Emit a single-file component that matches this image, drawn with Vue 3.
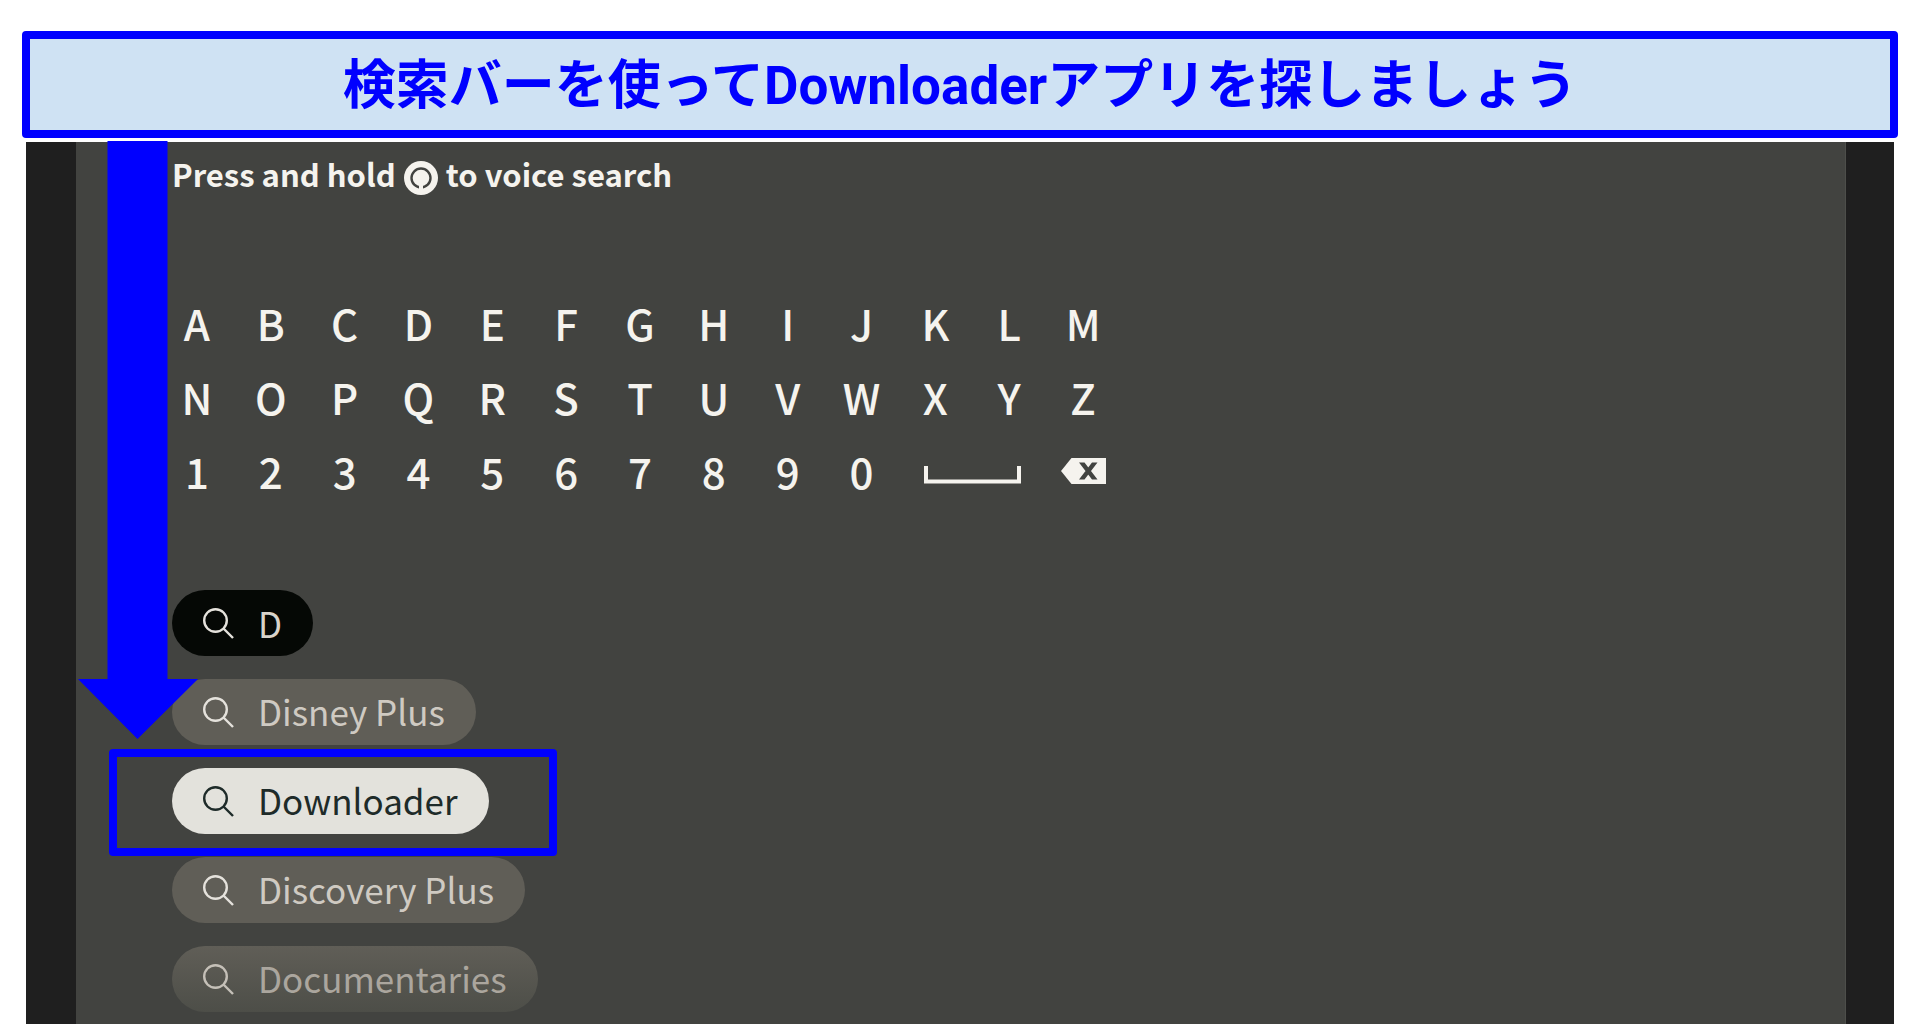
<template>
  <main class="page">
    <h1 class="banner">検索バーを使ってDownloaderアプリを探しましょう</h1>

    <section class="screen">
      <div class="search">
        <!-- Voice search hint -->
        <p class="hint">
          Press and hold
          <svg class="hint-icon" viewBox="0 0 34 34" aria-hidden="true">
            <circle cx="17" cy="17" r="17" fill="#f5f3ee" />
            <circle cx="17" cy="17" r="9.500" fill="none" stroke="#424340" stroke-width="2.400" />
            <path d="M15 23h4v5h-4z" fill="#f5f3ee" />
          </svg>
          to voice search
        </p>

        <!-- On-screen keyboard -->
        <div class="keyboard">
          <button v-for="key in keys" :key="key" class="key" type="button">{{ key }}</button>
          <button class="key key-space" type="button" aria-label="Space">
            <svg width="97" height="18" viewBox="0 0 97 18">
              <path d="M2 0v15.500h93V0" fill="none" stroke="#f5f3ee" stroke-width="4" />
            </svg>
          </button>
          <button class="key" type="button" aria-label="Delete">
            <svg width="45" height="26" viewBox="0 0 45 26">
              <path d="M10.500 0H45v26H10.500L0 13z" fill="#f5f3ee" />
              <path d="M18 4.500h5.500l13 17H31zM31 4.500h5.500l-13 17H18z" fill="#424340" />
            </svg>
          </button>
        </div>

        <!-- Query and suggestions -->
        <ul class="results">
          <li>
            <label class="pill pill-query">
              <svg class="pill-icon" viewBox="0 0 31 31" aria-hidden="true">
                <circle cx="12.500" cy="12.500" r="11.300" />
                <path d="M20.500 20.500l9.500 9.500" />
              </svg>
              <input v-model="query" class="query" type="text" aria-label="Search" />
            </label>
          </li>
          <li v-for="item in suggestions" :key="item.name" class="result">
            <button class="pill" :class="item.style" type="button">
              <svg class="pill-icon" viewBox="0 0 31 31" aria-hidden="true">
                <circle cx="12.500" cy="12.500" r="11.300" />
                <path d="M20.500 20.500l9.500 9.500" />
              </svg>
              <span>{{ item.name }}</span>
            </button>
            <div v-if="item.style === 'pill-selected'" class="highlight"></div>
          </li>
        </ul>
      </div>

      <svg class="arrow" viewBox="0 0 120 598" aria-hidden="true">
        <path d="M29.500 0h60v538H120l-60.500 60L0 538h29.500z" fill="#0000ff" />
      </svg>
    </section>
  </main>
</template>

<script setup>
import { ref } from "vue";

const keys = "ABCDEFGHIJKLMNOPQRSTUVWXYZ1234567890".split("");

const query = ref("D");

const suggestions = [
  { name: "Disney Plus", style: "" },
  { name: "Downloader", style: "pill-selected" },
  { name: "Discovery Plus", style: "" },
  { name: "Documentaries", style: "pill-faded" },
];
</script>

<style>
body {
  margin: 0;
  background: #ffffff;
}
</style>

<style scoped>
.page {
  padding: 31px 22px 12px;
  font-family: "Noto Sans CJK JP", "Noto Sans", sans-serif;
}

/* Banner */
.banner {
  margin: 0;
  padding: 8px 0 5px;
  border: 8px solid #0000ff;
  border-radius: 4px;
  background: #cfe2f3;
  color: #0000ff;
  font-family: Roboto, "Noto Sans CJK JP", sans-serif;
  font-size: 53px;
  font-weight: 700;
  line-height: 78px;
  text-align: center;
}

/* TV screen */
.screen {
  position: relative;
  margin: 4px 4px 0;
  padding: 0 48px 0 50px;
  background: #1f1f1f;
}

.search {
  padding: 8px 84px 12px 96px;
  border-right: 1px solid #4d4e4a;
  background: #424340;
}

.hint {
  display: flex;
  align-items: flex-end;
  gap: 8px;
  margin: 0;
  color: #f5f3ee;
  font-size: 31px;
  font-weight: 700;
  line-height: 48px;
}

.hint-icon {
  width: 34px;
  height: 34px;
  margin-bottom: 3px;
}

/* Keyboard */
.keyboard {
  display: grid;
  grid-template-columns: repeat(13, 1fr);
  grid-auto-rows: 74px;
  width: 960px;
  margin: 88px 0 82px -12px;
}

.key {
  display: flex;
  align-items: center;
  justify-content: center;
  padding: 0;
  border: none;
  background: none;
  color: #f5f3ee;
  font-family: inherit;
  font-size: 42px;
  font-weight: 500;
  line-height: 74px;
}

.key-space {
  grid-column: span 2;
  padding-top: 8px;
}

/* Results */
.results {
  display: flex;
  flex-direction: column;
  align-items: flex-start;
  gap: 23px;
  margin: 0;
  padding: 0;
  list-style: none;
}

.result {
  position: relative;
}

.pill {
  display: flex;
  align-items: center;
  gap: 24px;
  height: 66px;
  padding: 0 31px;
  border: none;
  border-radius: 33px;
  background: #605e57;
  color: #cfcac2;
  font-family: inherit;
  font-size: 35px;
  line-height: 64px;
}

.pill-icon {
  width: 31px;
  height: 31px;
  fill: none;
  stroke: #e5e2dc;
  stroke-width: 2.4;
}

.pill span {
  padding-bottom: 2px;
}

.pill-query {
  background: #050805;
}

.query {
  width: 24px;
  padding: 0;
  border: none;
  outline: none;
  background: none;
  color: #d8d3cb;
  font: inherit;
}

.pill-selected {
  background: #e3e2dc;
  color: #1e2b29;
}

.pill-selected .pill-icon {
  stroke: #1e2b29;
}

.pill-faded {
  background: linear-gradient(#605e57, #4d4e48);
  color: #aba69e;
}

.pill-faded .pill-icon {
  stroke: #c5c0b8;
}

/* Annotations */
.highlight {
  position: absolute;
  top: -19px;
  left: -63px;
  box-sizing: border-box;
  width: 448px;
  height: 107px;
  border: 8px solid #0000ff;
  border-radius: 4px;
  pointer-events: none;
}

.arrow {
  position: absolute;
  top: -1px;
  left: 52px;
  width: 120px;
  height: 598px;
  pointer-events: none;
}
</style>
